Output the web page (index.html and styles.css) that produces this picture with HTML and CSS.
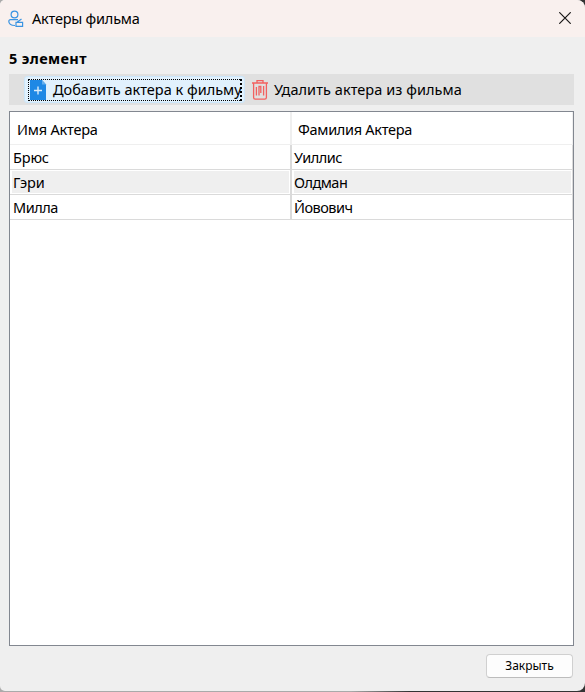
FILE: index.html
```html
<!DOCTYPE html>
<html lang="ru">
<head>
<meta charset="utf-8">
<title>Актеры фильма</title>
<link rel="stylesheet" href="styles.css">
</head>
<body>
<div class="window">
  <header class="titlebar">
    <svg class="app-icon" width="16" height="18" viewBox="0 0 16 18" fill="none" stroke="#3b94e2" stroke-width="1.2">
      <circle cx="6.5" cy="4.5" r="3.4"/>
      <path d="M10 9.7H2.5Q.8 9.7.8 11.3q0 4.2 6.2 4.2M8 12.3h6.6v4H8zM9 12.3l4.5-3.4"/>
    </svg>
    <h1><span class="t-title">Актеры фильма</span></h1>
    <svg class="close" width="12" height="12" viewBox="0 0 12 12" stroke="#191717" stroke-width="1.2"><path d="M.3.3l11.4 11.4M11.7.3L.3 11.7"/></svg>
  </header>
  <main>
    <h2><span class="t-film">5 элемент</span></h2>
    <div class="toolbar">
      <button class="tool active">
        <span class="focus">
        <svg width="18" height="20" viewBox="0 0 18 20"><path d="M1 0h12l4 4.5V20H1z" fill="#1e88e5"/><path d="M13 0l4 4.5h-4z" fill="#64afed"/><path d="M5 10.5h8M9 6.5v8" stroke="#d9ecfb" stroke-width="1.4"/></svg>
        <span class="t-add">Добавить актера к фильму</span>
        </span>
      </button>
      <button class="tool">
        <svg class="trash" width="16" height="20" viewBox="0 0 16 20" fill="none" stroke="#f2605f" stroke-width="1.3"><path d="M0 3h16M5 3V.7h6V3M1.6 3v14.5q0 1.7 1.7 1.7h9.4q1.7 0 1.7-1.7V3M4.4 15.5V7M7 15.5V6.5h1.8V13M11.6 6v9.5"/></svg>
        <span class="t-del">Удалить актера из фильма</span>
      </button>
    </div>
    <div class="grid">
      <div class="row head"><div><span class="t-h1">Имя Актера</span></div><div><span class="t-h2">Фамилия Актера</span></div></div>
      <div class="row"><div><span class="t-a1">Брюс</span></div><div><span class="t-a2">Уиллис</span></div></div>
      <div class="row alt"><div><span class="t-b1">Гэри</span></div><div><span class="t-b2">Олдман</span></div></div>
      <div class="row"><div><span class="t-c1">Милла</span></div><div><span class="t-c2">Йовович</span></div></div>
    </div>
    <footer><button class="ok"><span class="t-ok">Закрыть</span></button></footer>
  </main>
</div>
</body>
</html>
```
FILE: styles.css
```css
* { box-sizing: border-box; }
body { margin: 0; background: linear-gradient(90deg, #aaa 60%, #333 70%); font: 14.5px/20px "Noto Sans", sans-serif; color: #000; }
.window { width: 585px; height: 691px; background: #efefef; border-radius: 5px 8px 8px 5px; overflow: hidden; display: flex; flex-direction: column; }
h1, h2 { margin: 0; font-size: 14.5px; white-space: nowrap; }
h1 { font-weight: 400; flex: 1; margin-left: 8px; padding-bottom: 1px; }
.titlebar { height: 37px; flex: none; background: #f9f0ee; display: flex; align-items: center; padding: 0 14px 0 8px; }
.close { margin-top: -2px; }
main { flex: 1; display: flex; flex-direction: column; padding: 0 11px 0 9px; }
h2 { height: 37px; padding-top: 11px; }
button { font: inherit; color: inherit; margin: 0; padding: 0; border: 0; background: none; white-space: nowrap; text-align: left; }
svg { flex: none; }
.toolbar { height: 31px; background: #e0e0e0; display: flex; align-items: flex-start; padding: 2px 0 0 15px; }
.tool { height: 27px; display: flex; align-items: center; }
.tool.active { width: 221px; background: #e1f1fd; border: 1px solid #cce6fa; border-radius: 3px; padding-left: 3px; }
.focus { width: 214px; height: 22px; border: 1px dotted #000; border-right-width: 2px; display: flex; align-items: center; }
.t-add { margin-left: 6px; }
.t-add, .t-del { padding-bottom: 2px; }
.t-title { letter-spacing: -0.22px; }
.t-film { letter-spacing: 0.36px; }
.t-del { letter-spacing: 0.06px; }
.t-h1 { letter-spacing: -0.2px; }
.t-h2 { letter-spacing: -0.3px; }
.t-a1, .t-b1 { letter-spacing: -0.15px; }
.t-a2, .t-b2, .t-c1, .t-c2 { letter-spacing: -0.5px; }
.trash { margin: 0 6px 0 7px; }
.grid { height: 535px; margin-top: 6px; background: #fff; border: 1px solid #828790; }
.row { height: 25px; display: grid; grid-template-columns: 282px 281px; border-bottom: 1px solid #dadada; }
.row > div { border-right: 2px solid #dadada; padding: 2px 0 0 3px; white-space: nowrap; }
.row > div:last-child { border-right-width: 1px; padding-left: 2px; }
.head { height: 33px; border-color: #efefef; }
.head > div { border-color: #efefef; padding: 7px 0 0 7px; }
.head > div:last-child { padding-left: 6px; }
.alt > div { background: linear-gradient(#efefef, #efefef) 2px 1px / calc(100% - 3px) 22px no-repeat; }
footer { display: flex; justify-content: flex-end; padding: 8px 1px 0 0; }
.ok { width: 87px; height: 24px; background: #fdfdfd; border: 1px solid #d0d0d0; border-bottom-color: #bcbcbc; border-radius: 4px; font-size: 12px; text-align: center; }
```
